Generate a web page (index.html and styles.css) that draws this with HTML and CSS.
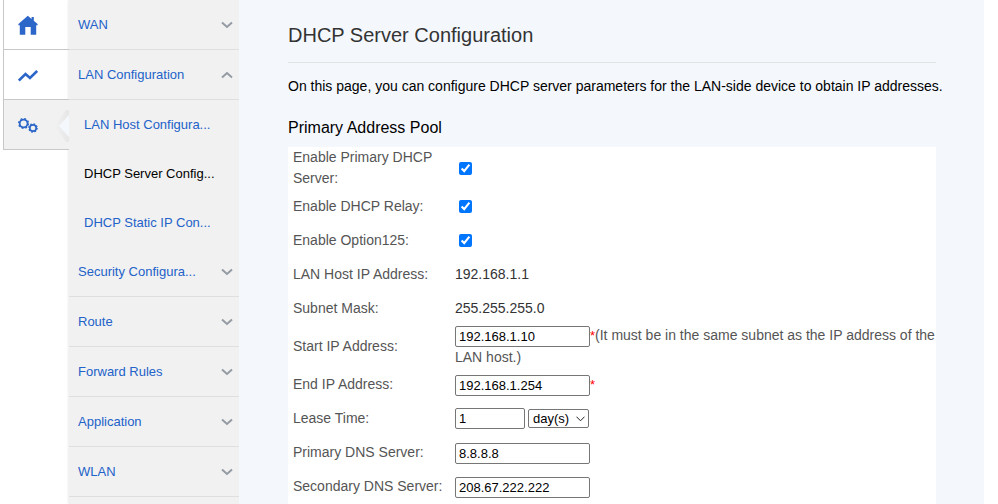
FILE: index.html
```html
<!DOCTYPE html>
<html lang="en">
<head>
    <meta charset="UTF-8">
    <meta name="viewport" content="width=device-width, initial-scale=1.0">
    <title>DHCP Server Configuration</title>
    <link rel="stylesheet" href="styles.css">
</head>
<body>
    <div class="layout">
        <div class="icon-bar">
            <a class="icon-tab" href="#" aria-label="Home">
                <svg width="20" height="20" viewBox="0 0 20 20">
                    <path fill="#2b66c8" d="M9.8 0.8 13.6 3.9V2H15.8V5.7L19.6 9V10.2H18.2V19.8H12.7V12H7.3V19.8H1.8V10.2H0.4V9Z"/>
                </svg>
            </a>
            <a class="icon-tab" href="#" aria-label="Status">
                <svg width="20" height="20" viewBox="0 0 20 20">
                    <path fill="none" stroke="#2b66c8" stroke-width="2.6" d="M0.8 15.5 7.5 9 12 13 19.2 6"/>
                </svg>
            </a>
            <a class="icon-tab active" href="#" aria-label="Advanced">
                <svg width="20" height="20" viewBox="0 0 20 20">
                    <g fill="none" stroke="#2b66c8">
                        <circle cx="5.6" cy="8.5" r="3.9" stroke-width="1.8"/>
                        <circle cx="5.6" cy="8.5" r="5" stroke-width="1.2" stroke-dasharray="1.9 2.03"/>
                        <circle cx="15" cy="13" r="3.2" stroke-width="1.7"/>
                        <circle cx="15" cy="13" r="4.2" stroke-width="1.2" stroke-dasharray="1.6 1.7"/>
                    </g>
                </svg>
                <svg class="pointer" width="14" height="32" viewBox="0 0 14 32">
                    <defs>
                        <linearGradient id="shade">
                            <stop offset="0" stop-color="#f1f1f1"/>
                            <stop offset="1" stop-color="#e6e6e6"/>
                        </linearGradient>
                    </defs>
                    <path fill="url(#shade)" d="M0 16 11 0H14V32H11Z"/>
                    <path fill="#f4f8fd" d="M4 16 14 5V27Z"/>
                </svg>
            </a>
        </div>

        <nav class="menu">
            <a class="menu-item" href="#">WAN <svg class="chevron" viewBox="0 0 12 8"><path d="M1 1.5 6 6 11 1.5"/></svg></a>
            <a class="menu-item" href="#">LAN Configuration <svg class="chevron up" viewBox="0 0 12 8"><path d="M1 1.5 6 6 11 1.5"/></svg></a>
            <div class="submenu">
                <a href="#">LAN Host Configura...</a>
                <a class="current" href="#">DHCP Server Config...</a>
                <a href="#">DHCP Static IP Con...</a>
            </div>
            <a class="menu-item" href="#">Security Configura... <svg class="chevron" viewBox="0 0 12 8"><path d="M1 1.5 6 6 11 1.5"/></svg></a>
            <a class="menu-item" href="#">Route <svg class="chevron" viewBox="0 0 12 8"><path d="M1 1.5 6 6 11 1.5"/></svg></a>
            <a class="menu-item" href="#">Forward Rules <svg class="chevron" viewBox="0 0 12 8"><path d="M1 1.5 6 6 11 1.5"/></svg></a>
            <a class="menu-item" href="#">Application <svg class="chevron" viewBox="0 0 12 8"><path d="M1 1.5 6 6 11 1.5"/></svg></a>
            <a class="menu-item" href="#">WLAN <svg class="chevron" viewBox="0 0 12 8"><path d="M1 1.5 6 6 11 1.5"/></svg></a>
        </nav>

        <main class="content">
            <h1>DHCP Server Configuration</h1>
            <p class="intro">On this page, you can configure DHCP server parameters for the LAN-side device to obtain IP addresses.</p>
            <h2>Primary Address Pool</h2>
            <form>
                <table class="settings">
                    <tr>
                        <th><label for="enableServer">Enable Primary DHCP Server:</label></th>
                        <td><input type="checkbox" id="enableServer" checked></td>
                    </tr>
                    <tr>
                        <th><label for="enableRelay">Enable DHCP Relay:</label></th>
                        <td><input type="checkbox" id="enableRelay" checked></td>
                    </tr>
                    <tr>
                        <th><label for="enableOption">Enable Option125:</label></th>
                        <td><input type="checkbox" id="enableOption" checked></td>
                    </tr>
                    <tr>
                        <th>LAN Host IP Address:</th>
                        <td>192.168.1.1</td>
                    </tr>
                    <tr>
                        <th>Subnet Mask:</th>
                        <td>255.255.255.0</td>
                    </tr>
                    <tr>
                        <th><label for="startIp">Start IP Address:</label></th>
                        <td><input type="text" id="startIp" value="192.168.1.10"><span class="required">*</span><span class="hint">(It must be in the same subnet as the IP address of the LAN host.)</span></td>
                    </tr>
                    <tr>
                        <th><label for="endIp">End IP Address:</label></th>
                        <td><input type="text" id="endIp" value="192.168.1.254"><span class="required">*</span></td>
                    </tr>
                    <tr>
                        <th><label for="leaseTime">Lease Time:</label></th>
                        <td>
                            <div class="lease">
                                <input type="text" id="leaseTime" class="short" value="1">
                                <div class="unit">
                                    <select id="leaseUnit" aria-label="Lease time unit">
                                        <option>day(s)</option>
                                    </select>
                                    <svg class="arrow" width="9" height="6" viewBox="0 0 9 6"><path d="M0.5 0.7 4.5 4.8 8.5 0.7"/></svg>
                                </div>
                            </div>
                        </td>
                    </tr>
                    <tr>
                        <th><label for="primaryDns">Primary DNS Server:</label></th>
                        <td><input type="text" id="primaryDns" value="8.8.8.8"></td>
                    </tr>
                    <tr>
                        <th><label for="secondaryDns">Secondary DNS Server:</label></th>
                        <td><input type="text" id="secondaryDns" value="208.67.222.222"></td>
                    </tr>
                </table>
            </form>
        </main>
    </div>
</body>
</html>
```
FILE: styles.css
```css
body {
    margin: 0;
    background: #fff;
    font-family: "Liberation Sans", Arial, sans-serif;
    font-size: 14px;
    color: #000;
}

a {
    text-decoration: none;
}

.layout {
    display: flex;
    height: 100vh;
    padding: 0 14px 0 3px;
    overflow: hidden;
}

.icon-bar {
    flex: 0 0 66px;
}

.icon-tab {
    position: relative;
    display: flex;
    align-items: center;
    box-sizing: border-box;
    height: 50px;
    padding-left: 14px;
    border-left: 1px solid #c8c8c8;
    border-bottom: 1px solid #c8c8c8;
}

.icon-tab.active {
    background: #f1f1f1;
}

.pointer {
    position: absolute;
    right: 0;
    top: 10px;
}

.menu {
    flex: 0 0 170px;
    background: #f1f1f1;
    box-shadow: -1px 0 2px #ececec;
    font-size: 13px;
}

.menu a {
    color: #2262c9;
}

.menu-item {
    display: flex;
    align-items: center;
    justify-content: space-between;
    height: 49px;
    padding: 0 6px 0 9px;
    border-bottom: 1px solid #dfdfdf;
}

.chevron {
    width: 12px;
    height: 8px;
    fill: none;
    stroke: #949ba3;
    stroke-width: 2;
}

.chevron.up {
    transform: rotate(180deg);
}

.submenu a {
    display: block;
    padding-left: 15px;
    line-height: 49px;
}

.submenu a.current {
    color: #000;
}

.content {
    flex: 1;
    min-width: 0;
    padding: 0 48px 0 49px;
    background: #f4f8fd;
}

h1 {
    margin: 0;
    padding: 20px 0 12px;
    border-bottom: 1px solid #e0e2e3;
    font-size: 20px;
    font-weight: normal;
    line-height: 30px;
    color: #333;
}

.intro {
    margin: 13px 0 20px;
    line-height: 20px;
    white-space: nowrap;
}

h2 {
    margin: 0 0 7px;
    font-size: 16px;
    font-weight: normal;
    line-height: 24px;
}

.settings {
    width: 100%;
    border-collapse: collapse;
    background: #fff;
    line-height: 21px;
}

.settings th,
.settings td {
    height: 34px;
    padding: 0 0 0 5px;
    text-align: left;
    font-weight: normal;
}

.settings th {
    width: 157px;
    color: #555;
}

.settings td {
    color: #333;
}

.settings th label {
    display: block;
    max-width: 150px;
}

.settings input[type="checkbox"] {
    display: block;
    margin: 0 4px;
}

.settings input[type="text"],
.settings select {
    box-sizing: border-box;
    border: 1px solid #767676;
    border-radius: 2px;
    background: #fff;
    font: 13px "Liberation Sans", Arial, sans-serif;
    color: #000;
    vertical-align: middle;
}

.settings input[type="text"] {
    width: 135px;
    height: 21px;
    padding: 0 3px;
}

.settings input.short {
    width: 70px;
}

.lease {
    display: flex;
    align-items: center;
    gap: 3px;
}

.unit {
    position: relative;
    display: flex;
}

.settings select {
    appearance: none;
    width: 61px;
    height: 19px;
    padding: 0 4px;
}

.arrow {
    position: absolute;
    right: 4px;
    top: 7px;
    fill: none;
    stroke: #222;
    pointer-events: none;
}

.required {
    font-size: 13px;
    color: #f00;
}

.hint {
    color: #555;
}
```
